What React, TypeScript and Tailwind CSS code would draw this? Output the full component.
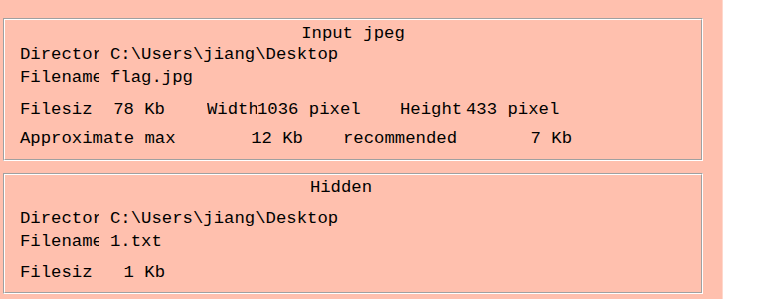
import React from "react";

function Groove({ children, className = "" }: { children: React.ReactNode; className?: string }) {
  return (
    <div className={`w-[700px] border border-t-[#a0a0a0] border-l-[#a0a0a0] border-b-white border-r-white ${className}`}>
      <div className="border border-t-white border-l-white border-b-[#a0a0a0] border-r-[#a0a0a0]">{children}</div>
    </div>
  );
}

function Label({ text, w }: { text: string; w: string }) {
  return <span className={`inline-block shrink-0 overflow-hidden whitespace-nowrap ${w}`}>{text}</span>;
}

export default function App() {
  return (
    <div className="w-[765px] h-[299px] bg-white flex">
      <div
        className="w-[723px] h-[299px] bg-[#ffc0ae] border-r border-r-[#ffd8cc] pt-[18px] pl-[3px] text-black text-[17.3px] whitespace-pre"
        style={{ fontFamily: '"Liberation Mono", "DejaVu Sans Mono", monospace' }}
      >
        {/* Input jpeg */}
        <Groove>
          <div className="pt-[5px] pb-[9px] pl-[15px]">
            <div className="h-[18px] flex items-center justify-center pr-[15px] leading-none">Input jpeg</div>
            <div className="h-[23px] flex items-center leading-none">
              <Label text="Directory" w="w-[79px]" />
              <span className="ml-[11px]">C:\Users\jiang\Desktop</span>
            </div>
            <div className="h-[23px] flex items-center leading-none">
              <Label text="Filename" w="w-[79px]" />
              <span className="ml-[11px]">flag.jpg</span>
            </div>
            <div className="h-[23px] mt-[9px] flex items-center leading-none">
              <Label text="Filesize" w="w-[72px]" />
              <span className="w-[73px] text-right">78 Kb</span>
              <Label text="Width" w="w-[50px] ml-[42px]" />
              <span className="w-[143px]">1036 pixel</span>
              <Label text="Height" w="w-[66px]" />
              <span>433 pixel</span>
            </div>
            <div className="h-[23px] mt-[6px] flex items-center leading-none">
              <span className="w-[230px]">Approximate max</span>
              <span className="w-[53px] text-right">12 Kb</span>
              <span className="w-[176px] ml-[40px]">recommended</span>
              <span className="w-[53px] text-right">7 Kb</span>
            </div>
          </div>
        </Groove>

        {/* Hidden */}
        <Groove className="mt-[12px]">
          <div className="pt-[4px] pb-[8px] pl-[15px]">
            <div className="h-[18px] flex items-center justify-center pr-[39px] leading-none">Hidden</div>
            <div className="h-[23px] mt-[10px] flex items-center leading-none">
              <Label text="Directory" w="w-[79px]" />
              <span className="ml-[11px]">C:\Users\jiang\Desktop</span>
            </div>
            <div className="h-[23px] flex items-center leading-none">
              <Label text="Filename" w="w-[79px]" />
              <span className="ml-[11px]">1.txt</span>
            </div>
            <div className="h-[23px] mt-[8px] flex items-center leading-none">
              <Label text="Filesize" w="w-[72px]" />
              <span className="w-[73px] text-right">1 Kb</span>
            </div>
          </div>
        </Groove>
      </div>
    </div>
  );
}
